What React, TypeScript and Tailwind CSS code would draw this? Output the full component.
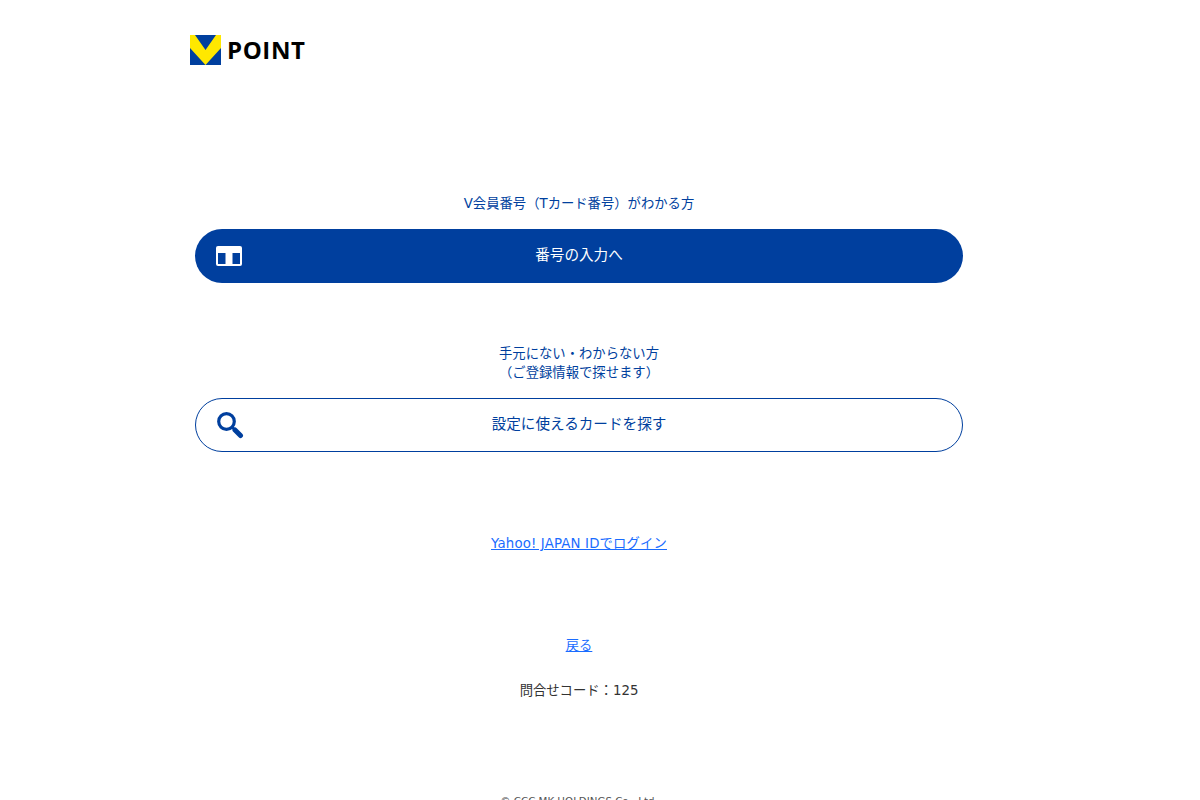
export default function App() {
  const font = { fontFamily: '"DejaVu Sans", "Noto Sans CJK JP", sans-serif' };
  return (
    <div style={font} className="h-[800px] overflow-hidden bg-white">
      <div className="ml-[190px] w-[778px] flex flex-col">
        <div className="pt-[35px] flex items-center h-[65px] gap-[6px]">
          <svg width="31" height="30" viewBox="0 0 31 30" className="shrink-0">
            <rect width="31" height="30" fill="#003f9e" />
            <path d="M0 0H5L15.5 15L26 0H31V13L15.5 30L0 13Z" fill="#ffe800" />
          </svg>
          <span className="font-['Open_Sans'] text-[24px] leading-[30px] font-bold tracking-[0.6px] text-black mt-[-1px]">POINT</span>
        </div>

        <div className="px-[5px] flex flex-col items-stretch">
          <p className="mt-[129px] h-[20px] text-center text-[13.33px] leading-[20px] text-[#003f9e]">V会員番号（Tカード番号）がわかる方</p>
          <a className="mt-[15px] relative h-[54px] pb-[2px] rounded-full bg-[#003f9e] flex items-center justify-center text-white text-[14.6px]">
            <svg width="26" height="20" viewBox="0 0 26 20" className="absolute left-[21px] top-[17px]">
              <rect width="26" height="20" rx="2" fill="#fff" />
              <rect x="2" y="7" width="7.5" height="11" fill="#003f9e" />
              <rect x="16.5" y="7" width="7.5" height="11" fill="#003f9e" />
            </svg>
            <span>番号の入力へ</span>
          </a>

          <p className="mt-[61px] text-center text-[13.33px] leading-[19px] text-[#003f9e]">手元にない・わからない方<br />（ご登録情報で探せます）</p>
          <a className="mt-[16px] relative h-[54px] pb-[2px] rounded-full border border-[#003f9e] bg-white flex items-center justify-center text-[#003f9e] text-[14.6px]">
            <svg width="28" height="28" viewBox="0 0 28 28" className="absolute left-[20px] top-[12px]">
              <circle cx="10.5" cy="10.5" r="7.8" fill="none" stroke="#003f9e" strokeWidth="3.2" />
              <path d="M16 16L18.5 18.5" stroke="#003f9e" strokeWidth="2.5" />
              <path d="M19 19L24.5 24.5" stroke="#003f9e" strokeWidth="5" strokeLinecap="round" />
            </svg>
            <span>設定に使えるカードを探す</span>
          </a>

          <a className="mt-[82px] h-[20px] text-center text-[13.33px] tracking-[0.15px] leading-[20px] text-[#1a6cff] underline">Yahoo! JAPAN IDでログイン</a>
          <a className="mt-[82px] h-[20px] text-center text-[13.33px] leading-[20px] text-[#1a6cff] underline">戻る</a>
          <p className="mt-[25px] h-[20px] text-center text-[13.33px] leading-[20px] text-[#333]">問合せコード：125</p>
          <p className="mt-[92px] text-center text-[10.25px] leading-[16px] text-[#555]">© CCC MK HOLDINGS Co., Ltd.</p>
        </div>
      </div>
    </div>
  );
}
